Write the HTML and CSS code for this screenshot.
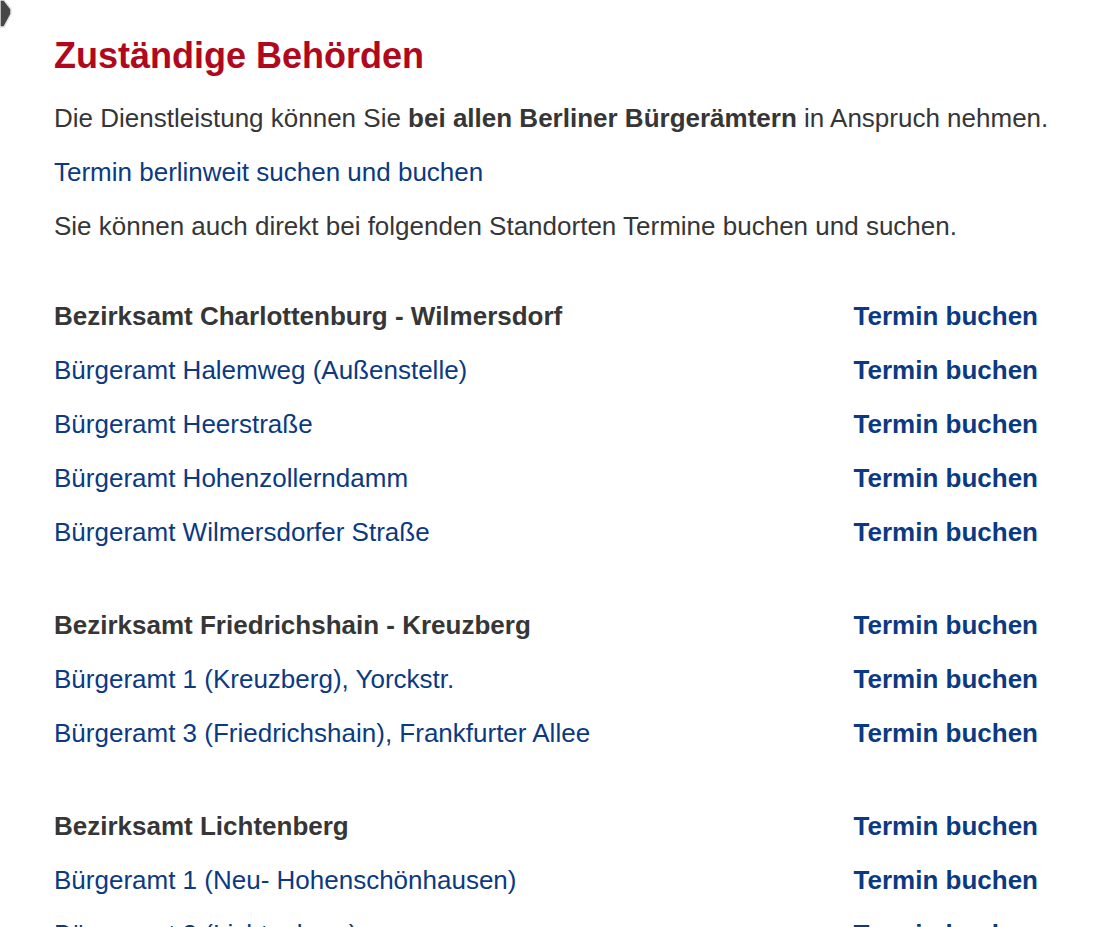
FILE: index.html
```html
<!doctype html>
<html lang="de">

<head>
    <meta charset="utf-8">
    <meta name="viewport" content="width=device-width, initial-scale=1">
    <title>Zuständige Behörden</title>
    <link rel="stylesheet" href="styles.css">
</head>

<body>
    <span class="corner">
        <svg width="16" height="32" viewBox="0 0 16 32">
            <path d="M0 0 L4 0 L11 9 L11 14 L4 27 L0 27 Z" fill="#474747" stroke="#e2e2e2" stroke-width="1.5"/>
        </svg>
    </span>

    <div class="content">
        <h2 class="title">Zuständige Behörden</h2>
        <p>Die Dienstleistung können Sie <strong>bei allen Berliner Bürgerämtern</strong> in Anspruch nehmen.</p>
        <p><a href="#">Termin berlinweit suchen und buchen</a></p>
        <p>Sie können auch direkt bei folgenden Standorten Termine buchen und suchen.</p>

        <ul class="group">
            <li class="head"><span>Bezirksamt Charlottenburg - Wilmersdorf</span><a class="book" href="#">Termin buchen</a></li>
            <li><a href="#">Bürgeramt Halemweg (Außenstelle)</a><a class="book" href="#">Termin buchen</a></li>
            <li><a href="#">Bürgeramt Heerstraße</a><a class="book" href="#">Termin buchen</a></li>
            <li><a href="#">Bürgeramt Hohenzollerndamm</a><a class="book" href="#">Termin buchen</a></li>
            <li><a href="#">Bürgeramt Wilmersdorfer Straße</a><a class="book" href="#">Termin buchen</a></li>
        </ul>

        <ul class="group">
            <li class="head"><span>Bezirksamt Friedrichshain - Kreuzberg</span><a class="book" href="#">Termin buchen</a></li>
            <li><a href="#">Bürgeramt 1 (Kreuzberg), Yorckstr.</a><a class="book" href="#">Termin buchen</a></li>
            <li><a href="#">Bürgeramt 3 (Friedrichshain), Frankfurter Allee</a><a class="book" href="#">Termin buchen</a></li>
        </ul>

        <ul class="group">
            <li class="head"><span>Bezirksamt Lichtenberg</span><a class="book" href="#">Termin buchen</a></li>
            <li><a href="#">Bürgeramt 1 (Neu- Hohenschönhausen)</a><a class="book" href="#">Termin buchen</a></li>
            <li><a href="#">Bürgeramt 2 (Lichtenberg)</a><a class="book" href="#">Termin buchen</a></li>
        </ul>
    </div>
</body>

</html>
```

FILE: styles.css
```css
body {
    margin: 0;
    background-color: white;
    color: #363636;
    font-family: "Liberation Sans", Arial, sans-serif;
    font-size: 26px;
    line-height: 36px;
}

.corner {
    position: absolute;
    top: 0;
    left: 0;
}

.content {
    padding: 34px 40px 0 54px;
}

.title {
    margin: 0 0 22px 0;
    color: #b0081c;
    font-size: 36px;
    line-height: 44px;
}

p {
    margin: 0 0 18px 0;
}

a {
    color: #0b3a82;
    text-decoration: none;
}

.group {
    list-style: none;
    margin: 54px 0 0 0;
    padding: 0;
    width: 984px;
}

.group + .group {
    margin-top: 57px;
}

.group li {
    display: flex;
    justify-content: space-between;
    margin-bottom: 18px;
}

.head span {
    font-weight: bold;
}

.book {
    font-weight: bold;
}
```
